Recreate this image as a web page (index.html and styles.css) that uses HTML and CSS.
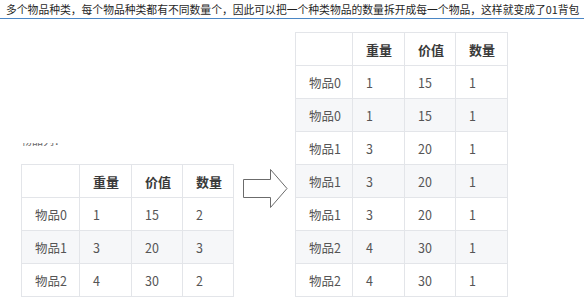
FILE: index.html
```html
<!DOCTYPE html>
<html lang="zh">
<head>
<meta charset="utf-8">
<link rel="stylesheet" href="styles.css">
</head>
<body>
<div class="topline">多个物品种类，每个物品种类都有不同数量个，因此可以把一个种类物品的数量拆开成每一个物品，这样就变成了01背包</div>
<div class="stage">
  <div class="leftcol">
    <div class="clip"><span class="clip-text">物品列：</span></div>
    <table class="grid grid-left">
      <colgroup><col class="c1"><col class="c2"><col class="c3"><col class="c4"></colgroup>
      <thead><tr><th></th><th>重量</th><th>价值</th><th>数量</th></tr></thead>
      <tbody>
        <tr><td>物品0</td><td>1</td><td>15</td><td>2</td></tr>
        <tr><td>物品1</td><td>3</td><td>20</td><td>3</td></tr>
        <tr><td>物品2</td><td>4</td><td>30</td><td>2</td></tr>
      </tbody>
    </table>
  </div>
  <svg class="arrow" width="46" height="41" viewBox="0 0 46 41">
    <polygon points="1.5,11.5 28.5,11.5 28.5,1.5 45,20.5 28.5,39.5 28.5,29.5 1.5,29.5" fill="#fff" stroke="#6b6b6b" stroke-width="1"/>
  </svg>
  <table class="grid grid-right">
    <colgroup><col class="r1"><col class="c2"><col class="c3"><col class="r4"></colgroup>
    <thead><tr><th></th><th>重量</th><th>价值</th><th>数量</th></tr></thead>
    <tbody>
      <tr><td>物品0</td><td>1</td><td>15</td><td>1</td></tr>
      <tr><td>物品0</td><td>1</td><td>15</td><td>1</td></tr>
      <tr><td>物品1</td><td>3</td><td>20</td><td>1</td></tr>
      <tr><td>物品1</td><td>3</td><td>20</td><td>1</td></tr>
      <tr><td>物品1</td><td>3</td><td>20</td><td>1</td></tr>
      <tr><td>物品2</td><td>4</td><td>30</td><td>1</td></tr>
      <tr><td>物品2</td><td>4</td><td>30</td><td>1</td></tr>
    </tbody>
  </table>
</div>
</body>
</html>
```
FILE: styles.css
```css
html, body {
  margin: 0;
  padding: 0;
  background: #fff;
}
body {
  width: 584px;
  height: 298px;
  overflow: hidden;
  font-family: "Noto Sans CJK SC", "Noto Sans", sans-serif;
  color: #333;
}
.topline {
  height: 19px;
  line-height: 18px;
  padding-left: 6px;
  font-size: 10.8px;
  color: #1f1f1f;
  white-space: nowrap;
  border-bottom: 1px solid #4a86c5;
  box-sizing: border-box;
}
.stage {
  display: flex;
  align-items: flex-start;
  padding-left: 21px;
}
.leftcol {
  display: flex;
  flex-direction: column;
  margin-top: 124px;
}
.clip {
  height: 4px;
  overflow: hidden;
  margin-bottom: 17px;
}
.clip-text {
  display: block;
  font-size: 11px;
  line-height: 12px;
  margin-top: -9px;
  color: #666;
}
.arrow {
  display: block;
  margin-left: 8px;
  margin-top: 149px;
}
.grid {
  border-collapse: collapse;
  table-layout: fixed;
  width: 212px;
  font-size: 12.5px;
}
.grid-right {
  margin-left: 7px;
  margin-top: 13px;
}
.c1 { width: 58px; }
.r1 { width: 57px; }
.c2 { width: 52px; }
.c3 { width: 51px; }
.c4 { width: 51px; }
.r4 { width: 52px; }
.grid th,
.grid td {
  border: 1px solid #e3e5e9;
  height: 33px;
  padding: 0 0 0 13px;
  text-align: left;
  vertical-align: middle;
  white-space: nowrap;
  box-sizing: border-box;
}
.grid th {
  font-weight: 700;
  font-size: 13px;
  color: #3a3a3a;
}
.grid td {
  color: #555;
}
.grid tbody tr:nth-child(even) td {
  background: #f6f7f9;
}
```
